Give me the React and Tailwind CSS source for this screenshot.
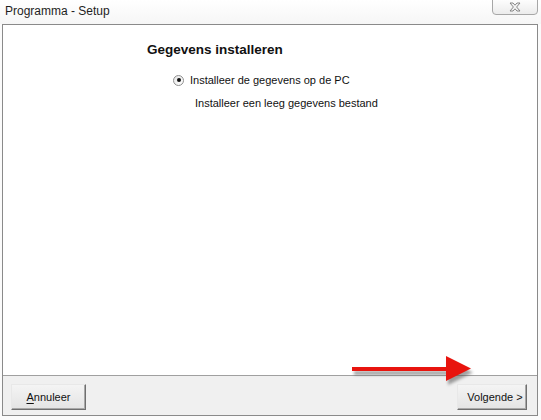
export default function App() {
  const font = { fontFamily: '"Liberation Sans", Arial, sans-serif' };
  return (
    <div className="relative w-[541px] h-[420px] bg-[#fbfbfb] overflow-hidden" style={font}>
      {/* title bar */}
      <div className="relative h-[24px] bg-gradient-to-b from-[#ffffff] to-[#f6f6f6]">
        <div className="absolute left-[5px] top-[3px] text-[12px] leading-[16px] text-[#1e1e1e]">Programma - Setup</div>
        <div className="absolute left-[492px] top-[-1px] w-[46px] h-[16px] border border-[#a7a7a7] rounded-b-[4px] bg-gradient-to-b from-[#fdfdfd] to-[#ececec] flex items-center justify-center">
          <svg width="12" height="10" viewBox="0 0 12 10">
            <path d="M1 1 L4 1 L6 3.2 L8 1 L11 1 L7.6 5 L11 9 L8 9 L6 6.8 L4 9 L1 9 L4.4 5 Z" fill="#f4f4f4" stroke="#7a7a7a" strokeWidth="0.9" strokeLinejoin="round" />
          </svg>
        </div>
      </div>
      {/* frame */}
      <div className="ml-[2px] w-[536px] h-[392px] border border-[#8a8a8a] flex flex-col">
        <div className="flex-1 bg-white pl-[144px] pt-[16px]">
          <div className="text-[13.5px] leading-[17px] font-bold text-[#111]">Gegevens installeren</div>
          <div className="mt-[14px] ml-[26px] flex items-center h-[16px]">
            <div className="w-[11px] h-[11px] rounded-full border border-[#8f8f8f] bg-gradient-to-br from-[#e6e6e6] to-[#ffffff] flex items-center justify-center">
              <div className="w-[4px] h-[4px] rounded-full bg-[#111]" />
            </div>
            <span className="ml-[6px] text-[11px] leading-[15px] text-[#111]">Installeer de gegevens op de PC</span>
          </div>
          <div className="mt-[8px] ml-[48px] text-[11px] leading-[15px] text-[#111]">Installeer een leeg gegevens bestand</div>
        </div>
        <div className="h-[40px] border-t border-[#a0a0a0] bg-[#f0f0f0] flex items-start justify-between pt-[8px] pl-[8px] pr-[10px]">
          <button className="w-[75px] h-[26px] bg-gradient-to-b from-[#f4f4f4] to-[#e4e4e4] border border-[#e8e8e8] border-r-[#6f6f6f] border-b-[#6f6f6f] shadow-[inset_-1px_-1px_0_#a8a8a8] text-[11px] text-[#111]">
            <span className="underline underline-offset-2">A</span>nnuleer
          </button>
          <button className="w-[70px] h-[26px] bg-gradient-to-b from-[#f4f4f4] to-[#e4e4e4] border border-[#e8e8e8] border-r-[#6f6f6f] border-b-[#6f6f6f] shadow-[inset_-1px_-1px_0_#a8a8a8] text-[11px] text-[#111] pl-[6px]">
            Volgende &gt;
          </button>
        </div>
      </div>
      {/* red arrow overlay */}
      <svg className="absolute left-[348px] top-[352px]" width="130" height="36" viewBox="0 0 130 36">
        <defs>
          <filter id="sh" x="-10%" y="-30%" width="130%" height="180%">
            <feGaussianBlur stdDeviation="1.6" />
          </filter>
        </defs>
        <path d="M4 16 L98 16 L98 5 L123 17.5 L98 30 L98 20 L4 20 Z" fill="#555" opacity="0.55" filter="url(#sh)" transform="translate(2 3)" />
        <path d="M4 15 L98 15 L98 4 L123 16.5 L98 29 L98 19 L4 19 Z" fill="#e8140e" />
      </svg>
    </div>
  );
}
